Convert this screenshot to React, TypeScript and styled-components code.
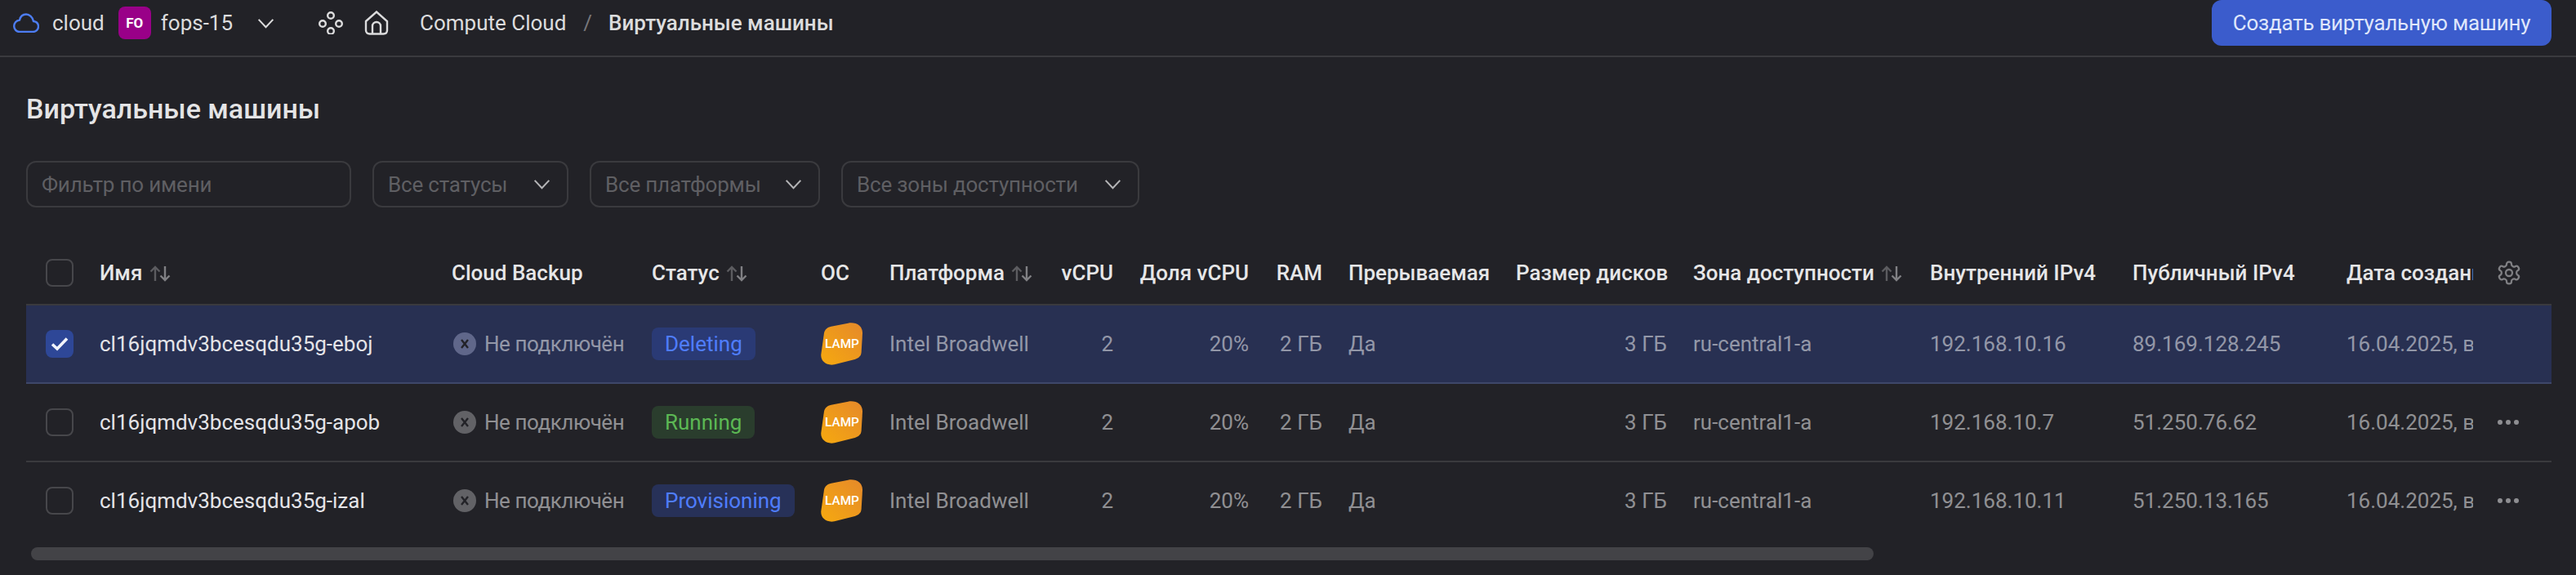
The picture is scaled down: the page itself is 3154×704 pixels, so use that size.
import * as React from 'react';
import styled, { createGlobalStyle } from 'styled-components';

const GlobalStyle = createGlobalStyle`
  html, body {
    margin: 0;
    padding: 0;
    background: #222227;
  }
  body {
    font-family: Roboto, "Noto Sans", sans-serif;
    font-size: 26px;
    color: #e2e2e3;
  }
  * {
    box-sizing: border-box;
  }
`;

type Vm = {
  name: string;
  status: string;
  tone: 'blue' | 'green' | 'navy';
  internalIp: string;
  publicIp: string;
  selected?: boolean;
};

const vms: Vm[] = [
  {
    name: 'cl16jqmdv3bcesqdu35g-eboj',
    status: 'Deleting',
    tone: 'blue',
    internalIp: '192.168.10.16',
    publicIp: '89.169.128.245',
    selected: true,
  },
  {
    name: 'cl16jqmdv3bcesqdu35g-apob',
    status: 'Running',
    tone: 'green',
    internalIp: '192.168.10.7',
    publicIp: '51.250.76.62',
  },
  {
    name: 'cl16jqmdv3bcesqdu35g-izal',
    status: 'Provisioning',
    tone: 'navy',
    internalIp: '192.168.10.11',
    publicIp: '51.250.13.165',
  },
];

const columnWidths = [74, 431, 245, 207, 84, 210, 96, 166, 90, 205, 217, 290, 248, 262, 171, 96];

const SortIcon = () => (
  <SortSvg viewBox="0 0 26 20" fill="none" strokeWidth="2.4">
    <path d="M7 19V2M1.5 7.5 7 2l5.500 5.500" stroke="#5c5c60" />
    <path d="M19 1v17M13.500 12.500 19 18l5.500-5.500" stroke="#808084" />
  </SortSvg>
);

const Chevron = () => (
  <ChevronSvg viewBox="0 0 22 14" fill="none" stroke="currentColor" strokeWidth="2.2">
    <path d="M1.500 2 11 12l9.500-10" />
  </ChevronSvg>
);

const LampLogo = () => (
  <LampSvg viewBox="0 0 156 156">
    <defs>
      <linearGradient id="lampFill" x1="0" y1="1" x2="1" y2="0">
        <stop offset="0" stopColor="#f6a90f" />
        <stop offset="1" stopColor="#e5892a" />
      </linearGradient>
    </defs>
    <path
      d="M12 38C15 24 24 17 38 14L100 2C130-3 154 12 153 40L149 108C148 122 140 130 125 135L50 154C22 160 -2 142 1 116Z"
      fill="url(#lampFill)"
    />
    <text x="78" y="94" textAnchor="middle" fontSize="46" fontWeight="500" fill="#fff">
      LAMP
    </text>
  </LampSvg>
);

const App: React.FC = () => {
  return (
    <>
      <GlobalStyle />
      <TopBar>
        <Crumbs>
          <CloudSvg viewBox="0 0 32 24" fill="none" stroke="#4d7df2" strokeWidth="2.4">
            <path d="M8 23h16c4 0 7-3 7-6.500 0-3.500-2.500-6-6-6.500C24 5 20 1.500 16 1.500c-4 0-7 2.500-8 7-4 .5-6.800 3.800-6.800 7.500S4 23 8 23Z" />
          </CloudSvg>
          <CloudName>cloud</CloudName>
          <FolderBadge>FO</FolderBadge>
          <FolderName>fops-15</FolderName>
          <Chevron />
          <ServiceSvg viewBox="0 0 30 28" fill="none" stroke="#dcdcdd" strokeWidth="2.400">
            <circle cx="15" cy="5" r="3.800" />
            <circle cx="5" cy="15" r="3.800" />
            <circle cx="25" cy="15" r="3.800" />
            <circle cx="15" cy="24" r="3.800" />
          </ServiceSvg>
          <HomeSvg viewBox="0 0 30 30" fill="none" stroke="#dcdcdd" strokeWidth="2.400">
            <path d="M2 13 15 1.500 28 13v11c0 3-2 4.500-4.500 4.500h-17C4 28.500 2 27 2 24Z" />
            <path d="M10 28.500V19a5 5 0 0 1 10 0v9.500" />
          </HomeSvg>
          <Crumb>Compute Cloud</Crumb>
          <Slash>/</Slash>
          <CurrentCrumb>Виртуальные машины</CurrentCrumb>
        </Crumbs>
        <PrimaryButton>Создать виртуальную машину</PrimaryButton>
      </TopBar>

      <Main>
        <Title>Виртуальные машины</Title>
        <Filters>
          <NameFilter>Фильтр по имени</NameFilter>
          <SelectFilter $width={240}>
            Все статусы
            <Chevron />
          </SelectFilter>
          <SelectFilter $width={282}>
            Все платформы
            <Chevron />
          </SelectFilter>
          <SelectFilter $width={365}>
            Все зоны доступности
            <Chevron />
          </SelectFilter>
        </Filters>

        <Table>
          <colgroup>
            {columnWidths.map((width, i) => (
              <Col key={i} $width={width} />
            ))}
          </colgroup>
          <thead>
            <tr>
              <Th>
                <Checkbox />
              </Th>
              <Th>
                Имя <SortIcon />
              </Th>
              <Th>Cloud Backup</Th>
              <Th>
                Статус <SortIcon />
              </Th>
              <Th>ОС</Th>
              <Th>
                Платформа <SortIcon />
              </Th>
              <Th $right>vCPU</Th>
              <Th $right>Доля vCPU</Th>
              <Th $right>RAM</Th>
              <Th>Прерываемая</Th>
              <Th $right>Размер дисков</Th>
              <Th>
                Зона доступности <SortIcon />
              </Th>
              <Th>Внутренний IPv4</Th>
              <Th>Публичный IPv4</Th>
              <Th>Дата создания</Th>
              <Th>
                <GearSvg viewBox="0 0 24 24" fill="none" stroke="#808084" strokeWidth="1.700">
                  <path d="M12.220 2h-.44a2 2 0 0 0-2 2v.18a2 2 0 0 1-1 1.730l-.43.250a2 2 0 0 1-2 0l-.150-.080a2 2 0 0 0-2.730.730l-.220.380a2 2 0 0 0 .730 2.730l.150.100a2 2 0 0 1 1 1.720v.510a2 2 0 0 1-1 1.740l-.150.090a2 2 0 0 0-.730 2.730l.220.380a2 2 0 0 0 2.730.730l.150-.080a2 2 0 0 1 2 0l.430.250a2 2 0 0 1 1 1.730V20a2 2 0 0 0 2 2h.440a2 2 0 0 0 2-2v-.180a2 2 0 0 1 1-1.730l.430-.250a2 2 0 0 1 2 0l.150.080a2 2 0 0 0 2.730-.730l.220-.390a2 2 0 0 0-.730-2.730l-.150-.080a2 2 0 0 1-1-1.740v-.500a2 2 0 0 1 1-1.740l.150-.090a2 2 0 0 0 .730-2.730l-.220-.380a2 2 0 0 0-2.730-.730l-.150.080a2 2 0 0 1-2 0l-.430-.250a2 2 0 0 1-1-1.730V4a2 2 0 0 0-2-2z" />
                  <circle cx="12" cy="12" r="3" />
                </GearSvg>
              </Th>
            </tr>
          </thead>
          <tbody>
            {vms.map((vm, i) => (
              <Row key={vm.name} $selected={vm.selected} $last={i === vms.length - 1}>
                <Td>
                  <Checkbox $checked={vm.selected}>
                    {vm.selected && (
                      <svg width="22" height="18" viewBox="0 0 22 18" fill="none" stroke="#f2f4fb" strokeWidth="3.600">
                        <path d="M2 9.500 8 15 20 2.500" />
                      </svg>
                    )}
                  </Checkbox>
                </Td>
                <NameCell>{vm.name}</NameCell>
                <Td $muted>
                  <Backup>
                    <BackupIcon $selected={vm.selected}>
                      <svg width="12" height="14" viewBox="0 0 12 14" fill="none" stroke="#222227" strokeWidth="2.400">
                        <path d="M2 2l8 10M10 2 2 12" />
                      </svg>
                    </BackupIcon>
                    Не подключён
                  </Backup>
                </Td>
                <Td>
                  <StatusTag $tone={vm.tone}>{vm.status}</StatusTag>
                </Td>
                <Td>
                  <LampLogo />
                </Td>
                <Td $muted>Intel Broadwell</Td>
                <Td $muted $right>
                  2
                </Td>
                <Td $muted $right>
                  20%
                </Td>
                <Td $muted $right>
                  2 ГБ
                </Td>
                <Td $muted>Да</Td>
                <Td $muted $right>
                  3 ГБ
                </Td>
                <Td $muted>ru-central1-a</Td>
                <Td $muted>{vm.internalIp}</Td>
                <Td $muted>{vm.publicIp}</Td>
                <Td $muted>16.04.2025, в</Td>
                <Td>
                  {!vm.selected && (
                    <Dots>
                      <i />
                      <i />
                      <i />
                    </Dots>
                  )}
                </Td>
              </Row>
            ))}
          </tbody>
        </Table>
        <ScrollThumb />
      </Main>
    </>
  );
};

export default App;

const TopBar = styled.header`
  display: flex;
  align-items: center;
  justify-content: space-between;
  height: 70px;
  padding: 1px 30px 13px 16px;
  border-bottom: 2px solid #3a3a3e;
`;

const Crumbs = styled.nav`
  display: flex;
  align-items: center;
  color: #dcdcdd;
`;

const CloudSvg = styled.svg`
  width: 32px;
  height: 24px;
`;

const CloudName = styled.span`
  margin-left: 16px;
`;

const FolderBadge = styled.span`
  display: flex;
  align-items: center;
  justify-content: center;
  width: 40px;
  height: 40px;
  margin-left: 17px;
  border-radius: 8px;
  background: #990088;
  color: #fff;
  font-size: 17px;
  font-weight: 700;
`;

const FolderName = styled.span`
  margin: 0 30px 0 12px;
`;

const ChevronSvg = styled.svg`
  flex: none;
  width: 21px;
  height: 13px;
`;

const ServiceSvg = styled.svg`
  width: 30px;
  height: 28px;
  margin-left: 54px;
`;

const HomeSvg = styled.svg`
  width: 30px;
  height: 30px;
  margin-left: 26px;
`;

const Crumb = styled.span`
  margin-left: 38px;
`;

const Slash = styled.span`
  margin: 0 20px 0 21px;
  color: #77777b;
`;

const CurrentCrumb = styled.span`
  font-weight: 500;
`;

const PrimaryButton = styled.button`
  width: 416px;
  height: 56px;
  padding: 0;
  border: 0;
  border-radius: 12px;
  background: #3b5ccc;
  color: #dfe6fb;
  font: inherit;
  letter-spacing: -0.25px;
`;

const Main = styled.main`
  width: 3154px;
  padding: 41px 30px 0 32px;
`;

const Title = styled.h1`
  margin: 0;
  font-size: 34px;
  line-height: 44px;
  font-weight: 500;
  color: #e4e4e5;
`;

const Filters = styled.div`
  display: flex;
  gap: 26px;
  margin-top: 42px;
`;

const NameFilter = styled.div`
  display: flex;
  align-items: center;
  width: 398px;
  height: 57px;
  padding: 0 18px 0 17px;
  border: 2px solid #3a3a3e;
  border-radius: 12px;
  color: #5f5f63;
  letter-spacing: -0.2px;
`;

const SelectFilter = styled(NameFilter)<{ $width: number }>`
  justify-content: space-between;
  width: ${(p) => p.$width}px;
  padding-right: 20px;
  svg {
    color: #b5b5b7;
  }
`;

const Table = styled.table`
  width: 3092px;
  margin-top: 42px;
  border-collapse: separate;
  border-spacing: 0;
  table-layout: fixed;
`;

const Col = styled.col<{ $width: number }>`
  width: ${(p) => p.$width}px;
`;

const Th = styled.th<{ $right?: boolean }>`
  height: 78px;
  padding: 0 16px;
  overflow: hidden;
  border-bottom: 2px solid #3a3a3e;
  color: #e6e6e7;
  font-weight: 500;
  white-space: nowrap;
  text-align: ${(p) => (p.$right ? 'right' : 'left')};
  &:first-child {
    padding: 0 24px;
  }
  &:last-child {
    padding: 0 0 0 28px;
  }
`;

const Row = styled.tr<{ $selected?: boolean; $last?: boolean }>`
  height: ${(p) => (p.$last ? 94 : 96)}px;
  background: ${(p) => (p.$selected ? '#283052' : 'transparent')};
  td {
    border-bottom: ${(p) => (p.$last ? '0' : `2px solid ${p.$selected ? '#3e4769' : '#3a3a3e'}`)};
  }
`;

const Td = styled.td<{ $right?: boolean; $muted?: boolean }>`
  padding: 0 16px;
  overflow: hidden;
  white-space: nowrap;
  color: ${(p) => (p.$muted ? 'rgba(255, 255, 255, 0.5)' : '#e2e2e3')};
  text-align: ${(p) => (p.$right ? 'right' : 'left')};
  &:first-child {
    padding: 0 24px;
  }
  &:last-child {
    padding: 0 0 0 30px;
  }
`;

const NameCell = styled(Td)`
  color: #e4e4e8;
`;

const Checkbox = styled.span<{ $checked?: boolean }>`
  display: flex;
  align-items: center;
  justify-content: center;
  width: 34px;
  height: 34px;
  border-radius: 8px;
  border: ${(p) => (p.$checked ? '0' : '2px solid #47474b')};
  background: ${(p) => (p.$checked ? '#2e4797' : 'transparent')};
`;

const SortSvg = styled.svg`
  width: 26px;
  height: 20px;
  margin-left: 2px;
  vertical-align: -2px;
`;

const Backup = styled.span`
  display: flex;
  align-items: center;
  gap: 10px;
  margin-left: 2px;
  letter-spacing: -0.45px;
`;

const BackupIcon = styled.span<{ $selected?: boolean }>`
  display: flex;
  flex: none;
  align-items: center;
  justify-content: center;
  width: 28px;
  height: 28px;
  border-radius: 50%;
  background: ${(p) => (p.$selected ? '#60678a' : '#626266')};
`;

const toneStyles = {
  blue: { bg: '#2a3a75', fg: '#4f7dff' },
  green: { bg: '#2a3d2d', fg: '#5cb854' },
  navy: { bg: '#273158', fg: '#4f7dff' },
};

const StatusTag = styled.span<{ $tone: keyof typeof toneStyles }>`
  display: inline-flex;
  align-items: center;
  height: 40px;
  padding: 0 16px;
  border-radius: 8px;
  background: ${(p) => toneStyles[p.$tone].bg};
  color: ${(p) => toneStyles[p.$tone].fg};
`;

const LampSvg = styled.svg`
  display: block;
  width: 52px;
  height: 52px;
`;

const GearSvg = styled.svg`
  display: block;
  width: 32px;
  height: 32px;
`;

const Dots = styled.span`
  display: flex;
  align-items: center;
  gap: 4px;
  i {
    width: 6px;
    height: 6px;
    border-radius: 50%;
    background: #8e8e92;
  }
`;

const ScrollThumb = styled.div`
  width: 2256px;
  height: 16px;
  margin: 10px 0 0 6px;
  border-radius: 8px;
  background: #434347;
`;
